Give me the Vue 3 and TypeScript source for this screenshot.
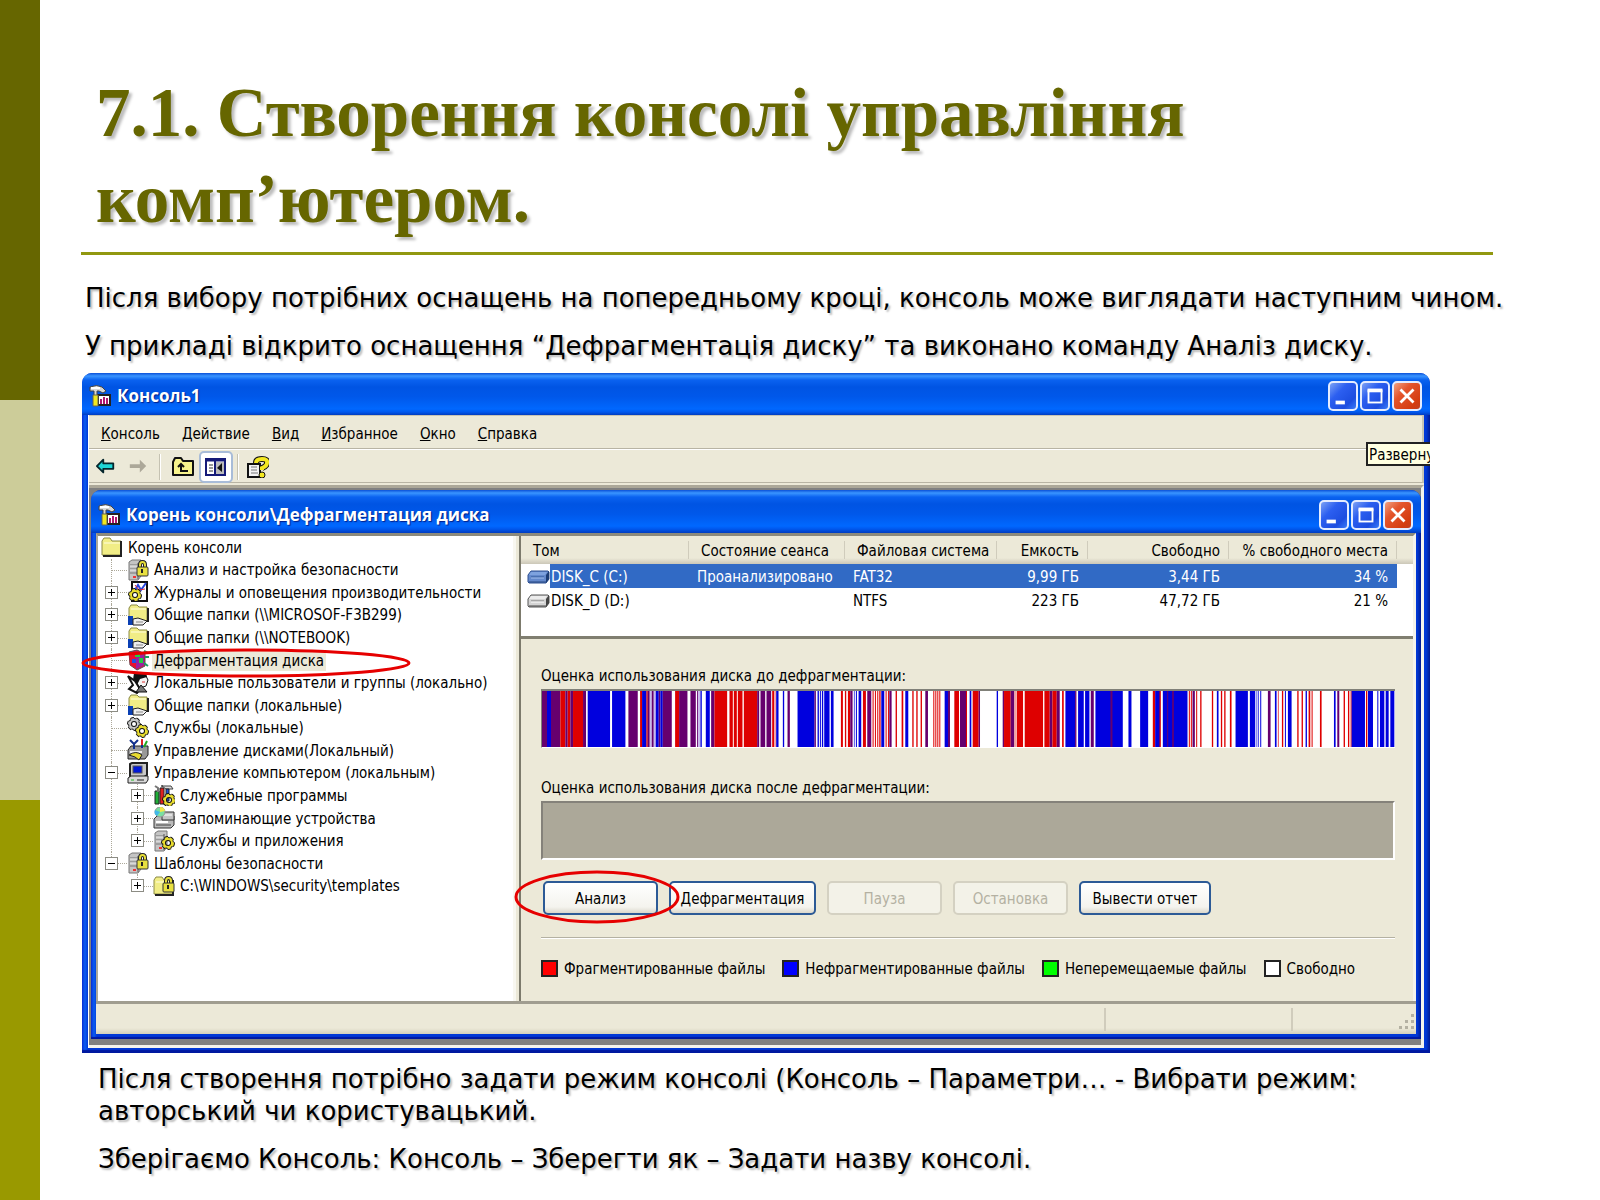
<script setup lang="ts">
interface TreeItem {
  text: string
  icon: string
  guides: string[]
  toggle?: '+' | '-'
  selected?: boolean
}

interface Volume {
  name: string
  state: string
  fs: string
  size: string
  free: string
  percent: string
  selected: boolean
}

const menus = ['Консоль', 'Действие', 'Вид', 'Избранное', 'Окно', 'Справка']

const server =
  '<path d="M2 3l3-2h9v16l-3 4H2z" fill="#c4c4c4" stroke="#777"/><path d="M3 6h8M3 10h8M3 14h8" stroke="#777"/><path d="M3 7h8M3 11h8" stroke="#eee"/><path d="M11 4v16" stroke="#555"/><path d="M6 18h3" stroke="#e33" stroke-width="2"/>'
const padlock =
  '<path d="M13 9V6q0-3 2.500-3t2.500 3v3" fill="none" stroke="#222" stroke-width="4"/><path d="M13 9V6q0-3 2.500-3t2.500 3v3" fill="none" stroke="#e6de38" stroke-width="2"/><rect x="10" y="8" width="11" height="9" rx="1" fill="#e8e040" stroke="#333"/><path d="M15 10v4" stroke="#222" stroke-width="2"/>'
const folder =
  '<path d="M1 5l2-3h6l2 3h9v14H1z" fill="#f1ed86" stroke="#8b8a45"/><path d="M3 7h16" stroke="#fffde0"/><path d="M20 5v15H2" fill="none" stroke="#222" stroke-width="2"/>'
const gear = (x: number, y: number, color: string): string =>
  `<g transform="translate(${x} ${y})"><circle r="5" fill="none" stroke="#111" stroke-width="4" stroke-dasharray="3 2"/><circle r="4" fill="none" stroke="#111" stroke-width="4"/><circle r="5" fill="none" stroke="${color}" stroke-width="2" stroke-dasharray="3 2"/><circle r="4" fill="none" stroke="${color}" stroke-width="2"/></g>`
const shared =
  '<path d="M2 4l2-3h6l2 2h8v14H2z" fill="#f1ed86" stroke="#8b8a45"/><path d="M4 5h15" stroke="#fffde0"/><path d="M21 4v14" stroke="#222" stroke-width="2"/><path d="M1 12h5v9H1z" fill="#0a3fb4"/><path d="M6 15l5-1 9 3-4 4H6z" fill="#eee" stroke="#222"/><path d="M9 18h7" stroke="#888"/>'

const icons: Record<string, string> = {
  folder,
  shared,
  security: server + padlock,
  logs:
    '<path d="M5 1h15v19H5z" fill="#fff" stroke="#111" stroke-width="2"/><path d="M8 9l3-5 3 5 5-7" fill="none" stroke="#2545e0" stroke-width="2"/><path d="M8 4l4 5 6-1" fill="none" stroke="#d23"/>' +
    gear(8, 14, '#e8dc30'),
  defrag:
    '<path d="M2 3l8-2 8 4v12l-8 4-7-5z" fill="#d0174c" stroke="#555"/><path d="M2 3l8 4v13l-7-4z" fill="#e81030"/><path d="M9 8l8-3v11l-8 4z" fill="#9a20a0"/><path d="M8 4h5v4H8zM12 9h4v5h-4z" fill="#20d040"/><path d="M17 2l4 2M18 8h4M17 14l4 3" stroke="#18a060" stroke-width="2"/><path d="M5 10h4v4H5z" fill="#2050e0"/>',
  users:
    '<path d="M8 2h10l3 6-2 6-6 2-5-6z" fill="#f4f4f4" stroke="#111"/><path d="M7 1h12l1 4-7 2-3 6-4-5z" fill="#111"/><path d="M1 4l7 5 5 8-3 4-8-4 4-4z" fill="#fff" stroke="#111" stroke-width="2"/><path d="M14 13l6 7H9z" fill="#777" stroke="#111"/><path d="M15 10h3" stroke="#d33"/>',
  services: gear(7, 7, '#c8c8c8') + gear(15, 14, '#e8dc30'),
  disks:
    '<path d="M1 11l3-4h17v9l-3 4H1z" fill="#999" stroke="#222"/><path d="M3 13h12" stroke="#eee" stroke-width="2"/><path d="M3 1l4 4 4-4M7 4v6M15 1v8" stroke="#12308c" stroke-width="2" fill="none"/><path d="M15 0v6" stroke="#d22" stroke-width="2"/><path d="M20 2l-3 6" stroke="#2a2" stroke-width="2"/><path d="M2 16q7-5 13 0l-3 5-4-3z" fill="#e8dc30" stroke="#222"/>',
  computer:
    '<path d="M3 2l2-1h15v12l-3 2H3z" fill="#c8c8c8" stroke="#222" stroke-width="2"/><rect x="6" y="4" width="9" height="7" fill="#0018d8" stroke="#555"/><path d="M1 16l3-2h17v4l-2 3H1z" fill="#d8d8d8" stroke="#222"/><path d="M4 18h3" stroke="#2b2"/><path d="M10 18h7" stroke="#222"/>',
  tools:
    '<path d="M2 7h4v13H2z" fill="#1fae38" stroke="#222"/><path d="M7 4h4v16H7z" fill="#e02020" stroke="#222"/><path d="M2 2l3 2v4M9 4V1" stroke="#777" stroke-width="2" fill="none"/><path d="M9 2h9l2 3h-7z" fill="#ddd" stroke="#444"/><path d="M13 5h3v12h-3z" fill="#1a50d8" stroke="#222"/>' +
    gear(16, 16, '#e8dc30'),
  storage:
    '<path d="M1 12l3-3h17v9l-3 3H1z" fill="#bbb" stroke="#333"/><path d="M9 5h12v8H9z" fill="#c4c4c4" stroke="#333"/><path d="M11 8h8" stroke="#fff"/><path d="M3 15h12" stroke="#fff" stroke-width="2"/><path d="M3 18h15" stroke="#444"/><circle cx="7" cy="5" r="5" fill="#7be0a0" stroke="#999"/><path d="M7 5V0a5 5 0 0 1 5 4z" fill="#f2e84a"/><path d="M7 5l-5-2a5 5 0 0 0 2 6z" fill="#40b8e8"/>',
  apps: server + gear(15, 13, '#e8dc30'),
  lockedFolder: folder + padlock,
  disk:
    '<path d="M1 8l3-4h17l1 1v7l-3 4H2l-1-1z" fill="#d4d4d4" stroke="#555"/><path d="M4 5h16l-2 3H2z" fill="#ececec"/><path d="M19 8l3-4v8l-3 4z" fill="#444"/><path d="M4 10h13" stroke="#777"/><path d="M4 11h13" stroke="#fff"/><path d="M2 15h17" stroke="#444"/>',
  diskBlue:
    '<path d="M1 8l3-4h17l1 1v7l-3 4H2l-1-1z" fill="#6489cc" stroke="#2c4f90"/><path d="M4 5h16l-2 3H2z" fill="#7ea2de"/><path d="M19 8l3-4v8l-3 4z" fill="#1c3c74"/><path d="M4 10h13" stroke="#2f5698"/><path d="M4 11h13" stroke="#a4c0ee"/><path d="M2 15h17" stroke="#24457f"/>',
  console:
    '<path d="M1 2q7-3 12 0l4 4-3 2-4-2H8v5H5V6H1z" fill="#d8d8d8" stroke="#444"/><path d="M2 3h9" stroke="#fff" stroke-width="2"/><path d="M9 10h12v10H9z" fill="#fff" stroke="#222" stroke-width="2"/><path d="M12 19v-5M15 19v-7M18 19v-6" stroke="#b01870" stroke-width="2"/><path d="M4 10h5v11H4z" fill="#f0e820" stroke="#665"/>',
  back: '<path d="M1 10l7-7v4h11v6H8v4z" fill="#1fd6d6" stroke="#05262c" stroke-width="2" stroke-linejoin="round"/>',
  forward: '<path d="M20 10l-7-7v5H2v4h11v5z" fill="#aca899"/>',
  up:
    '<path d="M1 6l2-4h6l2 3h10v14H1z" fill="#f7f38c" stroke="#111" stroke-width="2" stroke-linejoin="round"/><path d="M8 15h8M9 15V9M6 11l3-3 3 3" fill="none" stroke="#111" stroke-width="2"/>',
  pane:
    '<rect x="1" y="3" width="19" height="16" fill="#fff" stroke="#151a78" stroke-width="2"/><path d="M1 4h19" stroke="#151a78" stroke-width="3"/><path d="M10 3v16" stroke="#151a78" stroke-width="2"/><path d="M11 6h8v12h-8z" fill="#bbb"/><path d="M4 9h4M4 12h4M4 15h4" stroke="#333"/><path d="M17 7v9l-5-4z" fill="#111"/>',
  help:
    '<path d="M1 8h12v13H1z" fill="#f2f2f2" stroke="#111" stroke-width="2"/><path d="M4 11h6M4 14h6M4 17h7" stroke="#777"/><path d="M9 7q0-4 6-4t5 4q0 3-5 5v2" fill="none" stroke="#111" stroke-width="6"/><path d="M9 7q0-4 6-4t5 4q0 3-5 5v2" fill="none" stroke="#f4e820" stroke-width="4"/><circle cx="15" cy="19" r="3" fill="#f4e820" stroke="#111"/>',
}

const tree: TreeItem[] = [
  { text: 'Корень консоли', icon: 'folder', guides: [] },
  { text: 'Анализ и настройка безопасности', icon: 'security', guides: ['branch'] },
  { text: 'Журналы и оповещения производительности', icon: 'logs', guides: ['branch'], toggle: '+' },
  { text: 'Общие папки (\\\\MICROSOF-F3B299)', icon: 'shared', guides: ['branch'], toggle: '+' },
  { text: 'Общие папки (\\\\NOTEBOOK)', icon: 'shared', guides: ['branch'], toggle: '+' },
  { text: 'Дефрагментация диска', icon: 'defrag', guides: ['branch'], selected: true },
  { text: 'Локальные пользователи и группы (локально)', icon: 'users', guides: ['branch'], toggle: '+' },
  { text: 'Общие папки (локальные)', icon: 'shared', guides: ['branch'], toggle: '+' },
  { text: 'Службы (локальные)', icon: 'services', guides: ['branch'] },
  { text: 'Управление дисками(Локальный)', icon: 'disks', guides: ['branch'] },
  { text: 'Управление компьютером (локальным)', icon: 'computer', guides: ['branch'], toggle: '-' },
  { text: 'Служебные программы', icon: 'tools', guides: ['line', 'branch'], toggle: '+' },
  { text: 'Запоминающие устройства', icon: 'storage', guides: ['line', 'branch'], toggle: '+' },
  { text: 'Службы и приложения', icon: 'apps', guides: ['line', 'corner'], toggle: '+' },
  { text: 'Шаблоны безопасности', icon: 'security', guides: ['corner'], toggle: '-' },
  { text: 'C:\\WINDOWS\\security\\templates', icon: 'lockedFolder', guides: ['blank', 'corner'], toggle: '+' },
]

const volumes: Volume[] = [
  { name: 'DISK_C (C:)', state: 'Проанализировано', fs: 'FAT32', size: '9,99 ГБ', free: '3,44 ГБ', percent: '34 %', selected: true },
  { name: 'DISK_D (D:)', state: '', fs: 'NTFS', size: '223 ГБ', free: '47,72 ГБ', percent: '21 %', selected: false },
]

const legend = [
  { text: 'Фрагментированные файлы', cls: 'red' },
  { text: 'Нефрагментированные файлы', cls: 'blue' },
  { text: 'Неперемещаемые файлы', cls: 'green' },
  { text: 'Свободно', cls: 'white' },
]

// Disk map: colour letter followed by start and end; the rest of the strip is free space.
const mapFirst =
  'P35-50 B50-62 P62-90 R90-105 P105-112 R112-120 P120-128 R128-158 P158-167 B172-239 B245-285 P294-322 R329-335 B335-348 R348-352 P352-358 L358-364 P364-370 L370-376 B376-385 P385-390 B390-397 P397-424 R434-446 P446-471 P480-496 P500-503 L503-510 B510-514 B526-538 P542-552 R552-590 R597-607 R610-619 R622-636 R640-680 P680-686 P690-704 P708-722 R725-731 K731-737 B737-744 B757-761 P771-778 B801-852 P852-856 B861-865 B868-871 B874-878 B881-897 B901-909 R931-937 R943-947 R952-959 P959-966 B970-972 B976-979 B984-992 R997-1006 P1010-1022 R1026-1029 R1033-1036 R1040-1043 R1046-1050 B1052-1061 R1065-1068 R1072-1075 P1076-1083 R1095-1099 R1113-1118 B1124-1133 R1145-1149 R1157-1161 R1170-1174 P1184-1192 R1208-1211 R1214-1217 R1220-1223 R1226-1229 B1242-1252 P1252-1258 R1271-1285 P1288-1306'
const mapSecond =
  'R16-19 B27-32 R36-54 P54-58 B108-112 P126-130 R130-150 P150-161 K161-166 R168-187 R192-247 R251-267 P267-275 R275-288 P288-297 R304-309 B314-343 P343-347 B352-369 B373-386 P390-399 B404-486 P449-455 B503-512 B538-562 R576-583 B583-598 R596-600 B606-680 P619-622 P634-639 R684-687 R690-693 P695-702 R706-709 R718-722 R753-757 B768-773 R780-784 R790-794 R807-812 B824-861 B867-883 B887-889 B892-894 B898-901 P921-929 B942-947 R951-953 R963-967 B972-975 B981-992 R1009-1013 R1022-1026 B1034-1038 R1043-1048 R1052-1055 R1077-1082 B1119-1124 P1129-1135 R1148-1152 R1161-1165 R1169-1172 B1172-1212 R1215-1219 B1221-1236 B1249-1252 B1257-1270 B1274-1283 B1288-1300'
const mapColors: Record<string, string> = { R: '#de0000', B: '#0000de', P: '#66006e', L: '#c8b8ee', K: '#f4a0a0' }

function parseMap(src: string, shift: number) {
  return src.split(' ').map((s) => {
    const [a, b] = s.slice(1).split('-').map(Number)
    return { x: a + shift, w: b - a, fill: mapColors[s[0]] }
  })
}
const stripes = [...parseMap(mapFirst, -35), ...parseMap(mapSecond, 1255)]
</script>

<template>
  <div class="slide">
    <div class="side"><i></i><i></i><i></i></div>
    <main class="content">
      <h1>7.1. Створення консолі управління комп’ютером.</h1>
      <hr class="rule" />
      <div class="intro">
        <p>Після вибору потрібних оснащень на попередньому кроці, консоль може виглядати наступним чином.</p>
        <p>У прикладі відкрито оснащення “Дефрагментація диску” та виконано команду Аналіз диску.</p>
      </div>

      <section class="window outer">
        <header class="titlebar">
          <svg class="icon" viewBox="0 0 22 22" v-html="icons.console"></svg>
          <span class="caption">Консоль1</span>
          <button class="ctl" aria-label="Свернуть"><svg viewBox="0 0 28 28"><path d="M6 21h10" /></svg></button>
          <button class="ctl" aria-label="Развернуть"><svg viewBox="0 0 28 28"><path d="M6 8h16" /><rect class="thin" x="7" y="8" width="14" height="13" /></svg></button>
          <button class="ctl close" aria-label="Закрыть"><svg viewBox="0 0 28 28"><path d="M7 7l14 14M21 7l-14 14" /></svg></button>
        </header>
        <div class="client">
          <nav class="menubar">
            <button v-for="m in menus" :key="m"><u>{{ m[0] }}</u>{{ m.slice(1) }}</button>
          </nav>
          <div class="toolbar">
            <button aria-label="Назад"><svg class="icon small" viewBox="0 0 22 22" v-html="icons.back"></svg></button>
            <button class="fwd" aria-label="Вперед" disabled><svg class="icon small" viewBox="0 0 22 22" v-html="icons.forward"></svg></button>
            <span class="sep"></span>
            <button aria-label="Вверх"><svg class="icon" viewBox="0 0 22 22" v-html="icons.up"></svg></button>
            <button class="pressed" aria-label="Дерево консоли"><svg class="icon" viewBox="0 0 22 22" v-html="icons.pane"></svg></button>
            <span class="sep"></span>
            <button class="help" aria-label="Справка"><svg class="icon" viewBox="0 0 22 22" v-html="icons.help"></svg></button>
          </div>
          <div class="mdi">
            <section class="window inner">
              <header class="titlebar">
                <svg class="icon" viewBox="0 0 22 22" v-html="icons.console"></svg>
                <span class="caption">Корень консоли\Дефрагментация диска</span>
                <button class="ctl" aria-label="Свернуть"><svg viewBox="0 0 28 28"><path d="M6 21h10" /></svg></button>
                <button class="ctl" aria-label="Развернуть"><svg viewBox="0 0 28 28"><path d="M6 8h16" /><rect class="thin" x="7" y="8" width="14" height="13" /></svg></button>
                <button class="ctl close" aria-label="Закрыть"><svg viewBox="0 0 28 28"><path d="M7 7l14 14M21 7l-14 14" /></svg></button>
              </header>
              <div class="panes">
                <ul class="tree">
                  <li v-for="t in tree" :key="t.text">
                    <span v-for="(g, i) in t.guides" :key="i" class="guide" :class="g">
                      <button v-if="t.toggle && i === t.guides.length - 1" class="toggle" :class="{ open: t.toggle === '-' }" :aria-label="t.text"></button>
                    </span>
                    <svg class="icon" viewBox="0 0 22 22" v-html="icons[t.icon]"></svg>
                    <span class="label" :class="{ selected: t.selected }">{{ t.text }}</span>
                    <svg v-if="t.selected" class="mark-tree" viewBox="0 0 330 30"><ellipse cx="165" cy="15" rx="163" ry="13" /></svg>
                  </li>
                </ul>
                <div class="split"></div>
                <div class="details">
                  <div class="list">
                    <table>
                      <colgroup>
                        <col class="c1" /><col class="c2" /><col class="c3" /><col class="c4" /><col class="c5" /><col class="c6" /><col />
                      </colgroup>
                      <thead>
                        <tr>
                          <th>Том</th>
                          <th>Состояние сеанса</th>
                          <th>Файловая система</th>
                          <th class="num">Емкость</th>
                          <th class="num">Свободно</th>
                          <th class="num">% свободного места</th>
                          <th class="rest"></th>
                        </tr>
                      </thead>
                      <tbody>
                        <tr v-for="v in volumes" :key="v.name" :class="{ active: v.selected }">
                          <td class="name">
                            <div class="vol">
                              <svg class="icon" viewBox="0 0 23 19" v-html="v.selected ? icons.diskBlue : icons.disk"></svg>
                              <span>{{ v.name }}</span>
                            </div>
                          </td>
                          <td>{{ v.state }}</td>
                          <td>{{ v.fs }}</td>
                          <td class="num">{{ v.size }}</td>
                          <td class="num">{{ v.free }}</td>
                          <td class="num">{{ v.percent }}</td>
                          <td class="rest"></td>
                        </tr>
                      </tbody>
                    </table>
                  </div>
                  <div class="report">
                    <p class="est">Оценка использования диска до дефрагментации:</p>
                    <svg class="strip" viewBox="0 0 2557 10" preserveAspectRatio="none">
                      <rect v-for="(s, i) in stripes" :key="i" :x="s.x" y="0" :width="s.w" height="10" :fill="s.fill" />
                    </svg>
                    <p class="est second">Оценка использования диска после дефрагментации:</p>
                    <div class="strip empty"></div>
                    <div class="actions">
                      <span class="marked">
                        <button class="std">Анализ</button>
                        <svg class="mark-button" viewBox="0 0 166 54"><ellipse cx="83" cy="27" rx="81" ry="25" /></svg>
                      </span>
                      <button class="std wide">Дефрагментация</button>
                      <button class="std" disabled>Пауза</button>
                      <button class="std" disabled>Остановка</button>
                      <button class="std report-btn">Вывести отчет</button>
                    </div>
                    <hr class="groove" />
                    <ul class="legend">
                      <li v-for="l in legend" :key="l.cls"><i :class="l.cls"></i><span>{{ l.text }}</span></li>
                    </ul>
                  </div>
                </div>
              </div>
              <footer class="status">
                <span class="grow"></span><span class="s2"></span>
                <span class="s3">
                  <svg viewBox="0 0 18 18"><path d="M13 1h3v3h-3zM7 7h3v3H7zM13 7h3v3h-3zM1 13h3v3H1zM7 13h3v3H7zM13 13h3v3h-3z" /></svg>
                </span>
              </footer>
            </section>
          </div>
        </div>
        <div class="tooltip" role="tooltip">Разверну</div>
      </section>

      <div class="outro">
        <p>Після створення потрібно задати режим консолі (Консоль – Параметри… - Вибрати режим: авторський чи користувацький.</p>
        <p>Зберігаємо Консоль: Консоль – Зберегти як – Задати назву консолі.</p>
      </div>
    </main>
  </div>
</template>

<style>
body {
  margin: 0;
  background: #fff;
}
</style>

<style scoped>
* {
  box-sizing: border-box;
}
p,
ul {
  margin: 0;
  padding: 0;
  list-style: none;
}
button {
  margin: 0;
  padding: 0;
  border: 0;
  background: none;
  font: inherit;
  color: inherit;
}
.slide {
  display: flex;
  min-height: 100vh;
}
.side {
  display: flex;
  flex-direction: column;
  flex: 0 0 40px;
}
.side i {
  flex: 1;
  background: #666600;
}
.side i:nth-child(2) {
  background: #cccc99;
}
.side i:nth-child(3) {
  background: #999900;
}
.content {
  flex: 1;
  min-width: 0;
  padding-top: 70px;
}
h1 {
  margin: 0 107px 0 56px;
  font: bold 69px/86px "Liberation Serif", serif;
  color: #666600;
  text-shadow: 3px 3px 3px #bbb;
}
.rule {
  height: 3px;
  margin: 10px 107px 0 41px;
  border: 0;
  background: #919810;
}
.intro,
.outro {
  display: flex;
  flex-direction: column;
  gap: 16px;
  font: 26px/32px "DejaVu Sans", sans-serif;
  color: #000;
  text-shadow: 2px 2px 2px #bbb;
}
.intro {
  margin: 27px 0 11px 45px;
  white-space: nowrap;
}
.outro {
  margin: 10px 107px 0 58px;
}

.window {
  position: relative;
  border-radius: 10px 10px 0 0;
  background: linear-gradient(90deg, #0831d9 0, #0a5cf0 3px, #0038d6 6px, #0038d6 calc(100% - 4px), #001a90 100%);
}
.outer {
  margin: 0 170px 0 42px;
  padding: 0 6px 5px;
  box-shadow: inset 0 -3px 1px #0018a0;
  font: 15px/18px "DejaVu Sans Condensed", "DejaVu Sans", sans-serif;
  color: #000;
}
.inner {
  padding: 0 5px 5px;
  box-shadow: inset 0 -2px 1px #0018a0;
}
.titlebar {
  display: flex;
  align-items: center;
  gap: 2px;
  height: 42px;
  margin: 0 -6px;
  padding: 4px 8px 0 7px;
  border-radius: 10px 10px 0 0;
  background: linear-gradient(#0a50d8 0, #3a95ff 3px, #0a62f0 7px, #0054e3 14px, #0058ea 24px, #0068ff 36px, #0058ee 39px, #003cc0 100%);
}
.inner .titlebar {
  height: 43px;
  margin: 0 -5px;
  padding: 6px 8px 0 7px;
}
.icon {
  flex: none;
  width: 22px;
  height: 22px;
}
.caption {
  flex: 1;
  margin-left: 4px;
  font: bold 17px/24px "Open Sans", "Noto Sans", sans-serif;
  color: #fff;
  text-shadow: 1px 1px 1px #00208a;
  white-space: nowrap;
}
.ctl {
  width: 30px;
  height: 30px;
  border: 2px solid #e4ecff;
  border-radius: 5px;
  background: linear-gradient(135deg, #7da2f5 0, #2c5ff0 35%, #1c4de0 75%, #3a7cf8 100%);
}
.ctl.close {
  background: linear-gradient(135deg, #f0a080 0, #e4552c 35%, #d43c10 80%, #c04020 100%);
}
.ctl svg {
  display: block;
  width: 26px;
  height: 26px;
  fill: none;
  stroke: #fff;
  stroke-width: 4;
}
.ctl .thin {
  stroke-width: 2;
}
.ctl.close svg {
  stroke-width: 3;
}

.client {
  background: #ece9d8;
  border-left: 1px solid #fff;
}
.menubar {
  display: flex;
  align-items: center;
  gap: 22px;
  height: 34px;
  padding: 3px 12px 0;
  border-top: 1px solid #c8c4b4;
  border-right: 2px solid #c8c4b4;
  border-bottom: 1px solid #b8b4a4;
}
.toolbar {
  display: flex;
  align-items: center;
  height: 34px;
  padding: 2px 7px 0;
  border-top: 1px solid #fff;
  border-right: 2px solid #c8c4b4;
  border-bottom: 1px solid #b8b4a4;
}
.toolbar button {
  display: flex;
}
.icon.small {
  width: 20px;
  height: 20px;
}
.toolbar .fwd {
  margin-left: 12px;
}
.sep {
  width: 2px;
  height: 26px;
  margin: 0 11px 0 11px;
  border-left: 1px solid #c5c2b2;
  border-right: 1px solid #fff;
}
.toolbar .pressed {
  margin: 0 -7px 0 5px;
  padding: 3px 4px;
  border: 2px solid #a8bcd8;
  border-radius: 5px;
  background: #fff;
}
.toolbar .help {
  margin-left: -3px;
}
.mdi {
  margin-top: 2px;
  padding: 2px 0 6px 2px;
  border-top: 3px solid #aca899;
  border-right: 3px solid #f4f3ec;
  border-bottom: 3px solid #f4f3ec;
  background: #808080;
}
.panes {
  display: flex;
  height: 468px;
  border-top: 3px solid #8c8a7c;
  border-left: 2px solid #aca899;
  border-right: 3px solid #f4f3ec;
  background: #ece9d8;
}
.tree {
  display: grid;
  grid-template-rows: repeat(16, 1fr);
  align-self: stretch;
  flex: 0 0 415px;
  padding: 0 0 104px;
  background: #fff;
}
.tree li {
  position: relative;
  display: flex;
  align-items: center;
  min-height: 0;
  white-space: nowrap;
}
.tree .icon {
  margin: 0 3px;
}
.label {
  padding: 1px 2px 0;
  line-height: 20px;
}
.label.selected {
  background: #ece9d8;
}
.guide {
  position: relative;
  display: flex;
  align-items: center;
  justify-content: center;
  align-self: stretch;
  flex: 0 0 26px;
}
.guide::before {
  content: "";
  position: absolute;
  top: 0;
  bottom: 0;
  left: 13px;
  border-left: 1px dotted #aca899;
}
.guide::after {
  content: "";
  position: absolute;
  top: 50%;
  left: 13px;
  right: -3px;
  border-top: 1px dotted #aca899;
}
.guide.line::after,
.guide.blank::before,
.guide.blank::after {
  display: none;
}
.guide.corner::before {
  bottom: 50%;
}
.toggle {
  position: relative;
  z-index: 1;
  width: 13px;
  height: 13px;
  border: 1px solid #8c8c84;
  background:
    linear-gradient(#000, #000) center / 7px 1px no-repeat,
    linear-gradient(#000, #000) center / 1px 7px no-repeat,
    #fff;
}
.toggle.open {
  background: linear-gradient(#000, #000) center / 7px 1px no-repeat, #fff;
}
.mark-tree,
.mark-button {
  position: absolute;
  z-index: 2;
  fill: none;
  stroke: #e60000;
  stroke-width: 3;
  pointer-events: none;
}
.mark-tree {
  top: -1px;
  left: -17px;
  width: 330px;
  height: 30px;
}
.split {
  flex: 0 0 8px;
  border-left: 3px solid #f8f7f0;
  border-right: 2px solid #7c7a6c;
}
.details {
  flex: 1;
  min-width: 0;
}
.list {
  height: 103px;
  border-bottom: 3px solid #807e70;
  background: #fff;
}
table {
  width: 100%;
  border-collapse: collapse;
  table-layout: fixed;
  white-space: nowrap;
}
.c1 {
  width: 168px;
}
.c2 {
  width: 156px;
}
.c3 {
  width: 152px;
}
.c4 {
  width: 91px;
}
.c5 {
  width: 141px;
}
.c6 {
  width: 168px;
}
th,
td {
  height: 24px;
  padding: 2px 9px 0 8px;
  font-weight: normal;
  text-align: left;
}
th {
  height: 28px;
  padding: 2px 9px 0 12px;
  background: linear-gradient(#d0ccbc, #d0ccbc) right 5px / 1px 18px no-repeat, linear-gradient(#ece9d8 22px, #cbc7b8 100%);
}
th.rest {
  background: linear-gradient(#ece9d8 22px, #cbc7b8 100%);
}
.num {
  text-align: right;
}
th.num {
  padding-left: 0;
}
td.name,
.rest {
  padding: 0;
}
.vol {
  display: flex;
  align-items: center;
  padding-left: 6px;
}
.vol .icon {
  width: 23px;
  height: 19px;
}
.vol span {
  flex: 1;
  height: 24px;
  padding: 2px 0 0 1px;
  line-height: 22px;
}
.active {
  color: #fff;
}
.active td:not(.name):not(.rest),
.active .vol span {
  background: #316ac5;
}
.report {
  padding: 28px 18px 0 20px;
}
.est {
  height: 22px;
}
.strip {
  display: block;
  width: 100%;
  height: 59px;
  border: solid #808078;
  border-width: 2px 0 0 1px;
  border-bottom: 1px solid #fff;
  background: #fff;
}
.second {
  margin-top: 31px;
}
.strip.empty {
  border: 2px solid #85827a;
  border-right-color: #fff;
  border-bottom-color: #fff;
  background: #aca899;
}
.actions {
  display: flex;
  gap: 11px;
  margin-top: 21px;
  padding-left: 2px;
}
.marked {
  position: relative;
}
.mark-button {
  top: -11px;
  left: -29px;
  width: 166px;
  height: 54px;
}
.std {
  width: 115px;
  height: 34px;
  padding-top: 1px;
  border: 2px solid #2c5a96;
  border-radius: 5px;
  background: linear-gradient(#fff, #f4f3ee 80%, #dcd8cc);
}
.wide {
  width: 147px;
}
.report-btn {
  width: 132px;
}
.std:disabled {
  border-color: #d4d1c2;
  background: #f3f2e8;
  color: #b4b1a2;
}
.groove {
  height: 2px;
  margin: 22px 0 0;
  border: 0;
  border-top: 1px solid #b4b1a2;
  border-bottom: 1px solid #fff;
}
.legend {
  display: flex;
  gap: 17px;
  margin-top: 19px;
  white-space: nowrap;
}
.legend li {
  display: flex;
  align-items: center;
  gap: 6px;
}
.legend span {
  padding-top: 2px;
}
.legend i {
  width: 17px;
  height: 17px;
  border: 2px solid #222;
}
.red {
  background: #f00;
}
.blue {
  background: #00f;
}
.green {
  background: #0f0;
}
.white {
  background: #fff;
}
.status {
  display: flex;
  height: 33px;
  padding: 4px 0 3px;
  border-top: 3px solid #a09d90;
  background: linear-gradient(#ece9d8 24px, #d4d0bc 100%);
}
.status span {
  border-right: 2px solid #d0ccbc;
}
.status .grow {
  flex: 1;
}
.status .s2 {
  flex: 0 0 187px;
}
.status .s3 {
  display: flex;
  flex: 0 0 123px;
  align-items: flex-end;
  justify-content: flex-end;
  border: 0;
}
.status svg {
  width: 18px;
  height: 18px;
  fill: #b4b1a2;
}
.tooltip {
  position: absolute;
  top: 69px;
  right: 0;
  width: 64px;
  height: 24px;
  padding: 2px 0 0 1px;
  overflow: hidden;
  border: 2px solid #222;
  border-right: 0;
  background: #ffffe1;
  white-space: nowrap;
}
</style>
